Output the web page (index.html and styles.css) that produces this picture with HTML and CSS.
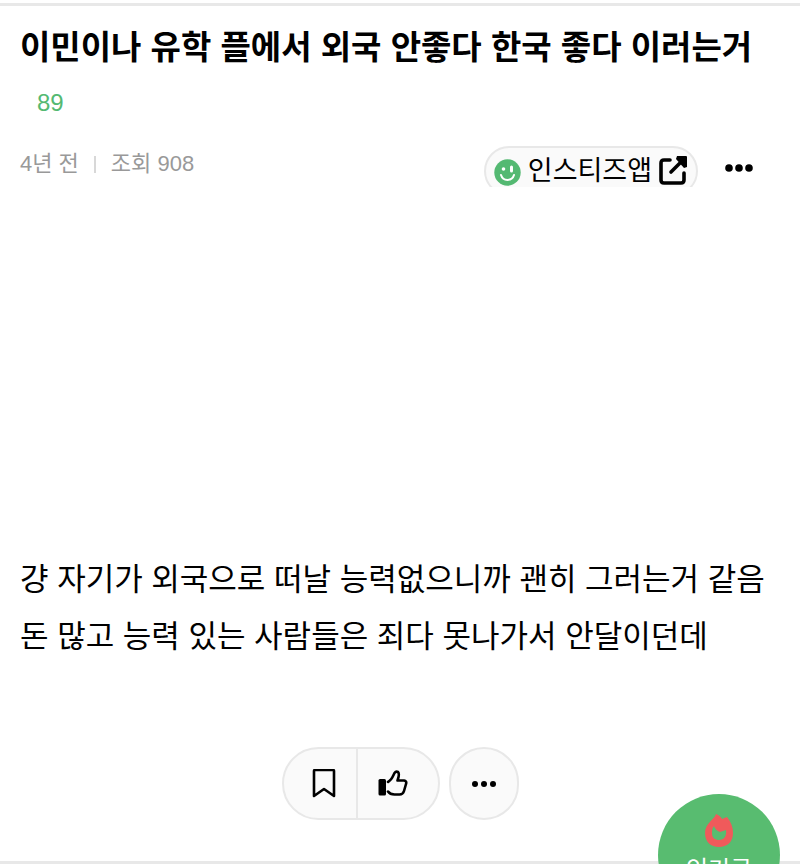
FILE: index.html
```html
<!DOCTYPE html>
<html lang="ko">
<head>
    <meta charset="UTF-8">
    <meta name="viewport" content="width=device-width, initial-scale=1.0">
    <title>이민이나 유학 플에서 외국 안좋다 한국 좋다 이러는거</title>
    <link rel="stylesheet" href="styles.css">
</head>
<body>
    <main class="post">
        <header class="post-header">
            <h1>이민이나 유학 플에서 외국 안좋다 한국 좋다 이러는거</h1>
            <a class="comment-count" href="#comments">89</a>
            <div class="info">
                <div class="meta">
                    <span>4년 전</span>
                    <span class="bar"></span>
                    <span>조회 908</span>
                </div>
                <div class="tools">
                    <div class="app-clip">
                        <a class="app-link" href="#app">
                            <svg width="27" height="30" viewBox="0 0 27 30" aria-hidden="true">
                                <circle cx="13.5" cy="16.5" r="13.2" fill="#54b972"/>
                                <circle cx="9.5" cy="13" r="1.8" fill="#fff"/>
                                <path d="M17.5 11v4" stroke="#fff" stroke-width="3" stroke-linecap="round"/>
                                <path d="M7 19c2 6.5 11 6.5 13 0" fill="none" stroke="#fff" stroke-width="2" stroke-linecap="round"/>
                            </svg>
                            <span>인스티즈앱</span>
                            <svg width="30" height="30" viewBox="0 0 30 30" aria-hidden="true">
                                <path d="M11 4H5Q2 4 2 7V24Q2 27 5 27H22Q25 27 25 24V17" fill="none" stroke="#000" stroke-width="3.6" stroke-linecap="round"/>
                                <path d="M12 16L23 5" stroke="#000" stroke-width="3.6" stroke-linecap="round"/>
                                <path d="M18 0h9q1 0 1 1v10l-3 1-8-9z" fill="#000"/>
                            </svg>
                        </a>
                    </div>
                    <button class="more" aria-label="더보기">
                        <svg width="28" height="8" viewBox="0 0 28 8"><circle cx="4" cy="4" r="3.8"/><circle cx="14" cy="4" r="3.8"/><circle cx="24" cy="4" r="3.8"/></svg>
                    </button>
                </div>
            </div>
        </header>

        <div class="content">
            <p>걍 자기가 외국으로 떠날 능력없으니까 괜히 그러는거 같음</p>
            <p>돈 많고 능력 있는 사람들은 죄다 못나가서 안달이던데</p>
        </div>

        <div class="actions">
            <div class="group">
                <button class="scrap" aria-label="스크랩">
                    <svg width="24" height="30" viewBox="0 0 24 30"><path d="M2 27V2Q2 1 3 1H21Q22 1 22 2V27L12 20Z" fill="none" stroke="#000" stroke-width="2.6" stroke-linejoin="round"/></svg>
                </button>
                <button class="like" aria-label="추천">
                    <svg width="30" height="28" viewBox="0 0 30 28">
                        <rect x="0.5" y="9" width="7.5" height="16.5" rx="1.5"/>
                        <path d="M10 12C14 10 15 6 16.5 3Q18 1 20 2C22 4 20.5 7 19.5 10.5H26Q29 11 28 14L26 21Q25 24.5 21.5 24.5H16.5Q12 24.5 10 21.5" fill="none" stroke="#000" stroke-width="2.6" stroke-linejoin="round" stroke-linecap="round"/>
                    </svg>
                </button>
            </div>
            <button class="round" aria-label="더보기">
                <svg width="24" height="6" viewBox="0 0 24 6"><circle cx="3" cy="3" r="3"/><circle cx="12" cy="3" r="3"/><circle cx="21" cy="3" r="3"/></svg>
            </button>
        </div>
    </main>

    <a class="hot" href="#hot">
        <svg width="30" height="34" viewBox="0 0 30 34" aria-hidden="true">
            <path d="M12 0C11 5 1 9 1 19C1 28 7 33 15 33S29 28 29 19C29 13 27 8 23 3L18 5C17 3 15 1 12 0ZM10 12C8 14 8 17 8 19C8 24 11 26 15 26C20 26 23 22 22 16L16 18C13 17 11 15 10 12Z" fill="#f05a5b" fill-rule="evenodd"/>
        </svg>
        <span>인기글</span>
    </a>
</body>
</html>
```
FILE: styles.css
```css
* {
    box-sizing: border-box;
}
html {
    height: 100%;
    overflow: hidden;
}
body {
    margin: 0;
    background: #fff;
    color: #000;
    font-family: "Liberation Sans", "Noto Sans CJK KR", sans-serif;
}
a {
    color: inherit;
    text-decoration: none;
}
button {
    margin: 0;
    padding: 0;
    border: none;
    background: none;
    cursor: pointer;
}
svg {
    display: block;
    flex-shrink: 0;
}
.post {
    margin-top: 3px;
    border-top: 3px solid #e8e8e8;
    border-bottom: 3px solid #e8e8e8;
    padding: 16px 20px 41px;
}
h1 {
    margin: 0;
    font-size: 33px;
    line-height: 52px;
    font-weight: 700;
}
.comment-count {
    display: block;
    width: fit-content;
    margin-left: 17px;
    padding-top: 13px;
    font-size: 24px;
    line-height: 32px;
    color: #54b972;
}
.info {
    display: flex;
    justify-content: space-between;
    align-items: flex-start;
    margin-top: 27px;
    padding-right: 27px;
}
.meta {
    display: flex;
    align-items: center;
    gap: 15px;
    padding-top: 2px;
    font-size: 22px;
    line-height: 32px;
    color: #999;
}
.bar {
    width: 2px;
    height: 17px;
    background: #d8d8d8;
}
.tools {
    display: flex;
    align-items: flex-start;
    gap: 27px;
}
/* the pill is cut off at the bottom of the info row */
.app-clip {
    height: 41px;
    overflow: hidden;
}
.app-link {
    display: flex;
    align-items: center;
    gap: 7px;
    height: 50px;
    padding: 0 7px 0 8px;
    border: 2px solid #e8e8e8;
    border-radius: 25px;
    background: #fafafa;
    font-size: 27px;
    line-height: 32px;
}
.more {
    padding: 18px 0;
}
.content {
    margin-top: 361px;
    font-size: 31px;
    line-height: 57px;
}
.content p {
    margin: 0;
}
.actions {
    display: flex;
    justify-content: center;
    gap: 9px;
    margin-top: 82px;
}
.group {
    display: flex;
    height: 73px;
    border: 2px solid #e8e8e8;
    border-radius: 37px;
    background: #fafafa;
}
.group button {
    display: flex;
    align-items: center;
}
.group .scrap {
    padding: 0 20px 0 28px;
    border-right: 2px solid #e8e8e8;
}
.group .like {
    padding: 0 30px 0 20px;
}
.round {
    display: flex;
    align-items: center;
    justify-content: center;
    width: 70px;
    height: 73px;
    border: 2px solid #e8e8e8;
    border-radius: 37px;
    background: #fafafa;
}
/* floating button, hangs over the lower edge of the window */
.hot {
    position: fixed;
    right: 20px;
    bottom: -52px;
    display: flex;
    flex-direction: column;
    align-items: center;
    width: 122px;
    height: 122px;
    padding-top: 20px;
    border-radius: 50%;
    background: #58bc70;
    color: #fff;
    font-size: 24px;
    line-height: 44px;
}
```
